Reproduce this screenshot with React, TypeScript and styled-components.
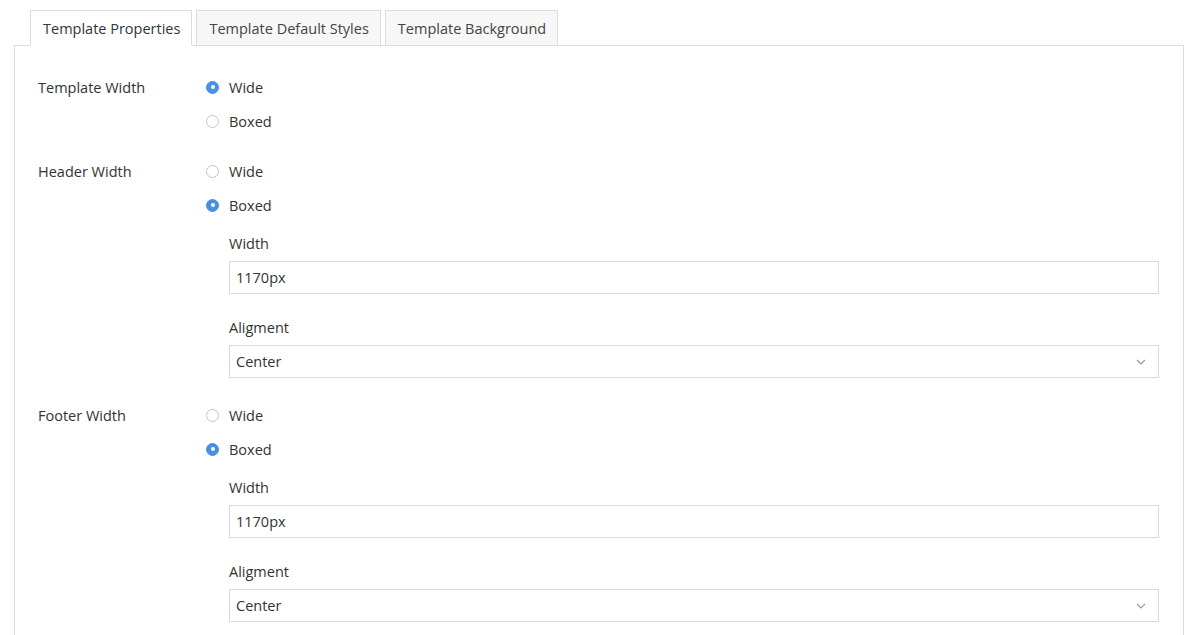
import * as React from 'react';
import styled, { createGlobalStyle } from 'styled-components';

const GlobalStyle = createGlobalStyle`
    body {
        margin: 0;
        background: #fff;
        font-family: 'Open Sans', 'Noto Sans', sans-serif;
        font-size: 14.5px;
        color: #333;
    }
`;

const Page = styled.div`
    padding: 10px 16px 0 14px;
`;

const TabBar = styled.div`
    display: flex;
    gap: 4px;
    margin-left: 16px;
`;

const Tab = styled.div<{ $active?: boolean }>`
    height: 36px;
    box-sizing: border-box;
    padding: 1px 11px 0 12px;
    display: flex;
    align-items: center;
    border: 1px solid #dddddd;
    border-bottom-color: ${(p) => (p.$active ? '#ffffff' : '#dddddd')};
    background: ${(p) => (p.$active ? '#ffffff' : '#f7f7f7')};
    color: ${(p) => (p.$active ? '#2f3640' : '#444')};
    margin-bottom: -1px;
    position: relative;
`;

const Panel = styled.div`
    width: 1170px;
    box-sizing: border-box;
    border: 1px solid #dddddd;
    padding: 24px 24px 40px 23px;
`;

const Group = styled.div`
    display: grid;
    grid-template-columns: 167px 1fr;
    & + & {
        margin-top: 16px;
    }
`;

const GroupLabel = styled.div`
    height: 34px;
    line-height: 35px;
`;

const Options = styled.div`
    display: flex;
    flex-direction: column;
`;

const RadioRow = styled.label`
    height: 34px;
    display: flex;
    align-items: center;
    gap: 10px;
`;

const RadioDot = styled.span<{ $checked?: boolean }>`
    width: 13px;
    height: 13px;
    box-sizing: border-box;
    border-radius: 50%;
    margin-left: 1px;
    display: flex;
    align-items: center;
    justify-content: center;
    background: ${(p) => (p.$checked ? '#4a90e2' : '#ffffff')};
    border: 1px solid ${(p) => (p.$checked ? '#4a90e2' : '#c4c4c4')};
    &::after {
        content: '';
        width: 4px;
        height: 4px;
        border-radius: 50%;
        background: #fff;
        display: ${(p) => (p.$checked ? 'block' : 'none')};
    }
`;

const SubFields = styled.div`
    padding-left: 24px;
    padding-top: 11px;
    padding-bottom: 4px;
`;

const FieldLabel = styled.div`
    height: 20px;
    line-height: 21px;
    margin-bottom: 8px;
`;

const Field = styled.div`
    & + & {
        margin-top: 23px;
    }
`;

const Input = styled.div`
    height: 33px;
    box-sizing: border-box;
    border: 1px solid #d9d9d9;
    padding: 0 6px;
    display: flex;
    align-items: center;
    justify-content: space-between;
    color: #333;
`;

const Chevron = styled.svg`
    margin-right: 6px;
`;

interface IRadioProps {
    checked?: boolean;
    label: string;
}

const Radio: React.FunctionComponent<IRadioProps> = ({ checked, label }) => (
    <RadioRow>
        <RadioDot $checked={checked} />
        {label}
    </RadioRow>
);

const BoxedFields: React.FunctionComponent = () => (
    <SubFields>
        <Field>
            <FieldLabel>Width</FieldLabel>
            <Input>1170px</Input>
        </Field>
        <Field>
            <FieldLabel>Aligment</FieldLabel>
            <Input>
                Center
                <Chevron width="10" height="6" viewBox="0 0 10 6">
                    <path d="M1 1l4 4 4-4" fill="none" stroke="#9a9a9a" strokeWidth="1.2" />
                </Chevron>
            </Input>
        </Field>
    </SubFields>
);

const App: React.FunctionComponent = () => (
    <Page>
        <GlobalStyle />
        <TabBar>
            <Tab $active>Template Properties</Tab>
            <Tab>Template Default Styles</Tab>
            <Tab>Template Background</Tab>
        </TabBar>
        <Panel>
            <Group>
                <GroupLabel>Template Width</GroupLabel>
                <Options>
                    <Radio checked label="Wide" />
                    <Radio label="Boxed" />
                </Options>
            </Group>
            <Group>
                <GroupLabel>Header Width</GroupLabel>
                <Options>
                    <Radio label="Wide" />
                    <Radio checked label="Boxed" />
                    <BoxedFields />
                </Options>
            </Group>
            <Group>
                <GroupLabel>Footer Width</GroupLabel>
                <Options>
                    <Radio label="Wide" />
                    <Radio checked label="Boxed" />
                    <BoxedFields />
                </Options>
            </Group>
        </Panel>
    </Page>
);

export default App;
